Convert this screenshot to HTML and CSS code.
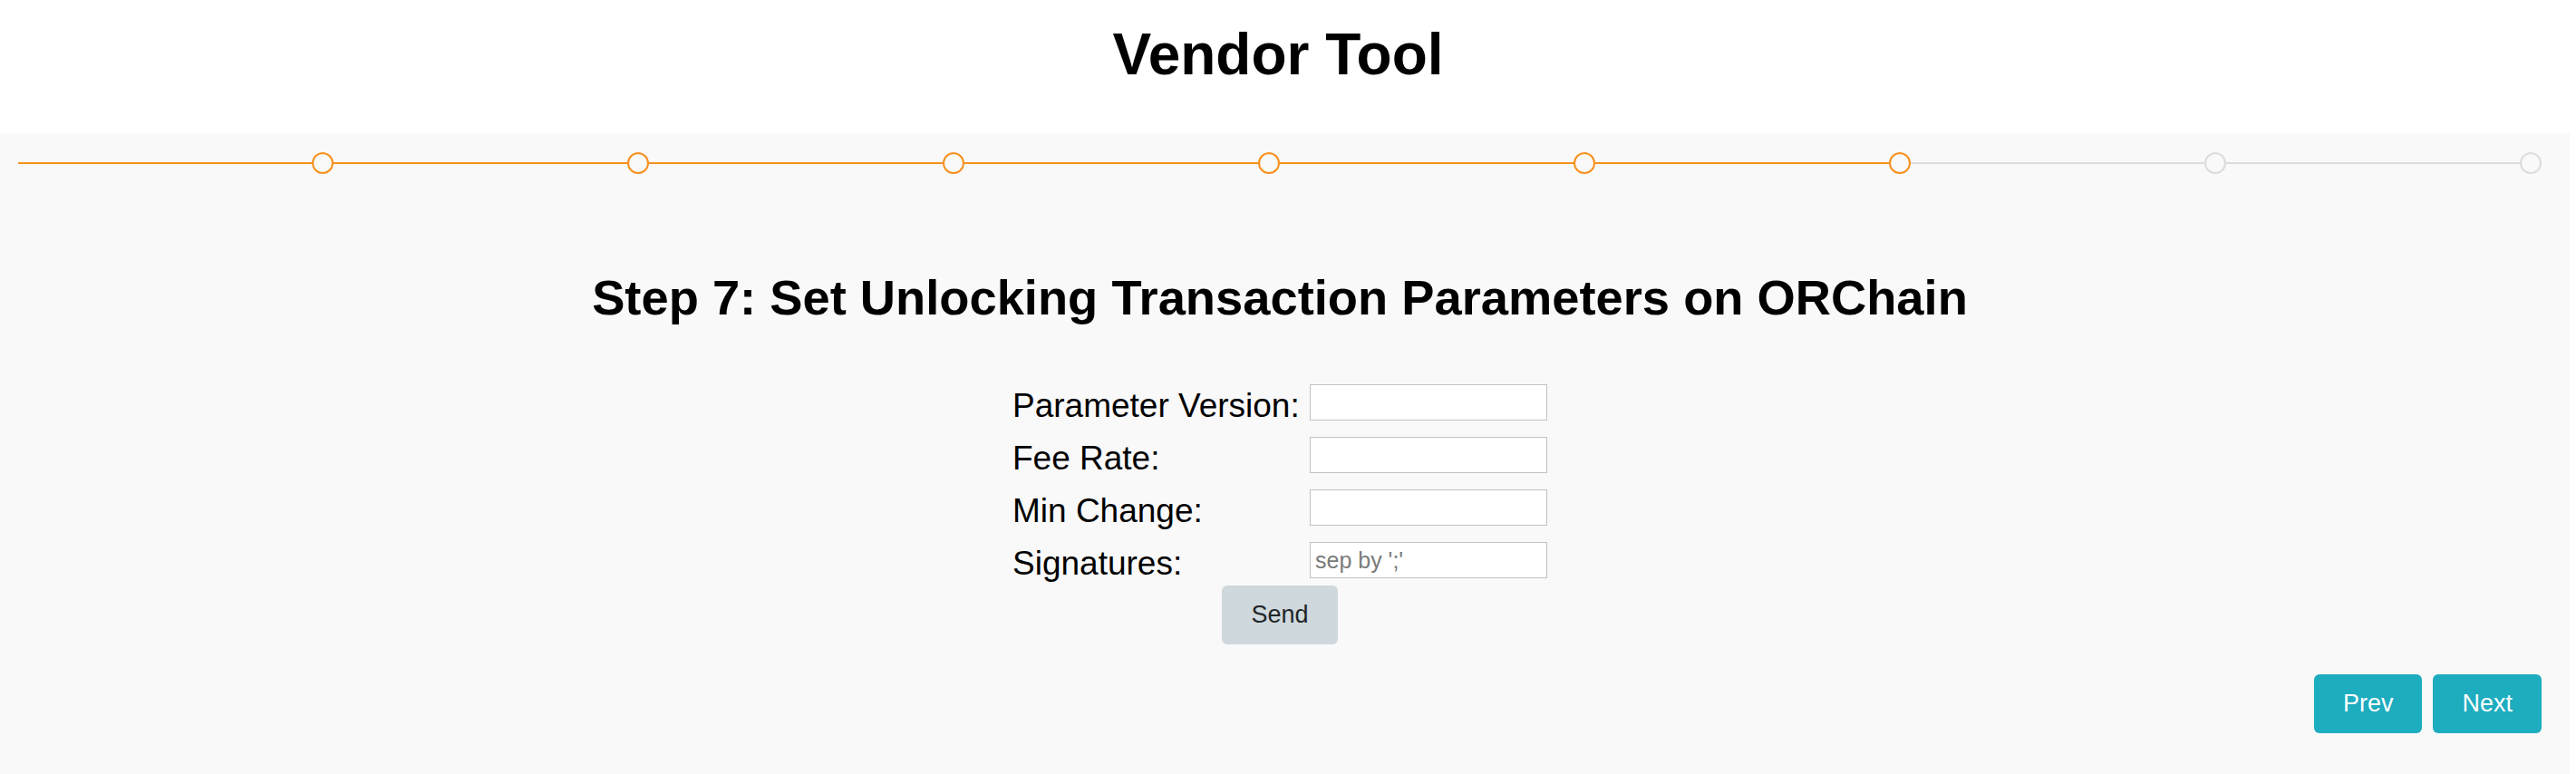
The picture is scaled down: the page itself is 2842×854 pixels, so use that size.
FILE: index.html
```html
<!DOCTYPE html>
<html lang="en">
<head>
<meta charset="utf-8">
<title>Vendor Tool</title>
<link rel="stylesheet" href="styles.css">
</head>
<body>
<header class="header">
  <h1 class="app-title">Vendor Tool</h1>
</header>
<main class="panel">
  <div class="stepper">
    <div class="step done"><span class="line"></span><span class="dot"></span></div>
    <div class="step done"><span class="line"></span><span class="dot"></span></div>
    <div class="step done"><span class="line"></span><span class="dot"></span></div>
    <div class="step done"><span class="line"></span><span class="dot"></span></div>
    <div class="step done"><span class="line"></span><span class="dot"></span></div>
    <div class="step done"><span class="line"></span><span class="dot"></span></div>
    <div class="step"><span class="line"></span><span class="dot"></span></div>
    <div class="step"><span class="line"></span><span class="dot"></span></div>
  </div>
  <h2 class="step-title">Step 7: Set Unlocking Transaction Parameters on ORChain</h2>
  <form class="form">
    <div class="row"><label class="label">Parameter Version:</label><input class="field" type="text"></div>
    <div class="row"><label class="label">Fee Rate:</label><input class="field" type="text"></div>
    <div class="row"><label class="label">Min Change:</label><input class="field" type="text"></div>
    <div class="row"><label class="label">Signatures:</label><input class="field" type="text" placeholder="sep by ';'"></div>
    <div class="send-wrap"><button type="button" class="btn btn-send">Send</button></div>
  </form>
  <div class="nav">
    <button type="button" class="btn btn-nav">Prev</button>
    <button type="button" class="btn btn-nav">Next</button>
  </div>
</main>
</body>
</html>
```
FILE: styles.css
```css
* { box-sizing: border-box; }
html, body { margin: 0; padding: 0; background: #ffffff; }
body {
  font-family: "Liberation Sans", Arial, Helvetica, sans-serif;
  color: #000;
  width: 2842px;
  height: 854px;
  overflow: hidden;
}
.header {
  width: 2820px;
  height: 147px;
  padding-top: 23px;
  text-align: center;
}
.app-title {
  margin: 0;
  font-size: 64px;
  font-weight: 700;
  line-height: normal;
}
.panel {
  width: 2835px;
  height: 707px;
  background: #f9f9f9;
  padding: 21px 31px 0 20px;
}
.stepper {
  display: flex;
  align-items: center;
  height: 24px;
}
.step {
  flex: 1;
  display: flex;
  align-items: center;
}
.line {
  flex: 1;
  height: 2px;
  background: #dcdcdc;
}
.dot {
  width: 24px;
  height: 24px;
  border-radius: 50%;
  border: 2px solid #dcdcdc;
  background: #f9f9f9;
}
.step.done .line { background: #f7901e; }
.step.done .dot { border-color: #f7901e; }
.step-title {
  margin: 106px 0 0;
  text-align: center;
  font-size: 54.3px;
  font-weight: 700;
  line-height: 62px;
}
.form {
  width: 590px;
  margin: 64px auto 0;
  display: flex;
  flex-direction: column;
  gap: 18px;
}
.row {
  display: flex;
  align-items: flex-start;
  height: 40px;
}
.label {
  width: 328px;
  font-size: 37px;
  line-height: 40px;
  padding-top: 4px;
  margin-bottom: -4px;
  white-space: nowrap;
}
.field {
  width: 262px;
  height: 40px;
  border: 1px solid #c2c2c2;
  background: #fff;
  padding: 0 5px;
  font-family: "Liberation Sans", Arial, sans-serif;
  font-size: 25px;
  color: #333;
  outline: none;
}
.field::placeholder { color: #7a7a7a; }
.send-wrap {
  display: flex;
  justify-content: center;
  margin-top: -10px;
}
.btn {
  font-family: "Liberation Sans", Arial, sans-serif;
  font-size: 27px;
  height: 65px;
  border: none;
  border-radius: 6px;
  cursor: pointer;
}
.btn-send {
  width: 128px;
  background: #cfd8dc;
  color: #212529;
}
.nav {
  display: flex;
  justify-content: flex-end;
  gap: 12px;
  margin-top: 33px;
}
.btn-nav {
  padding: 0 32px;
  background: #1eacbf;
  color: #fff;
}
```
